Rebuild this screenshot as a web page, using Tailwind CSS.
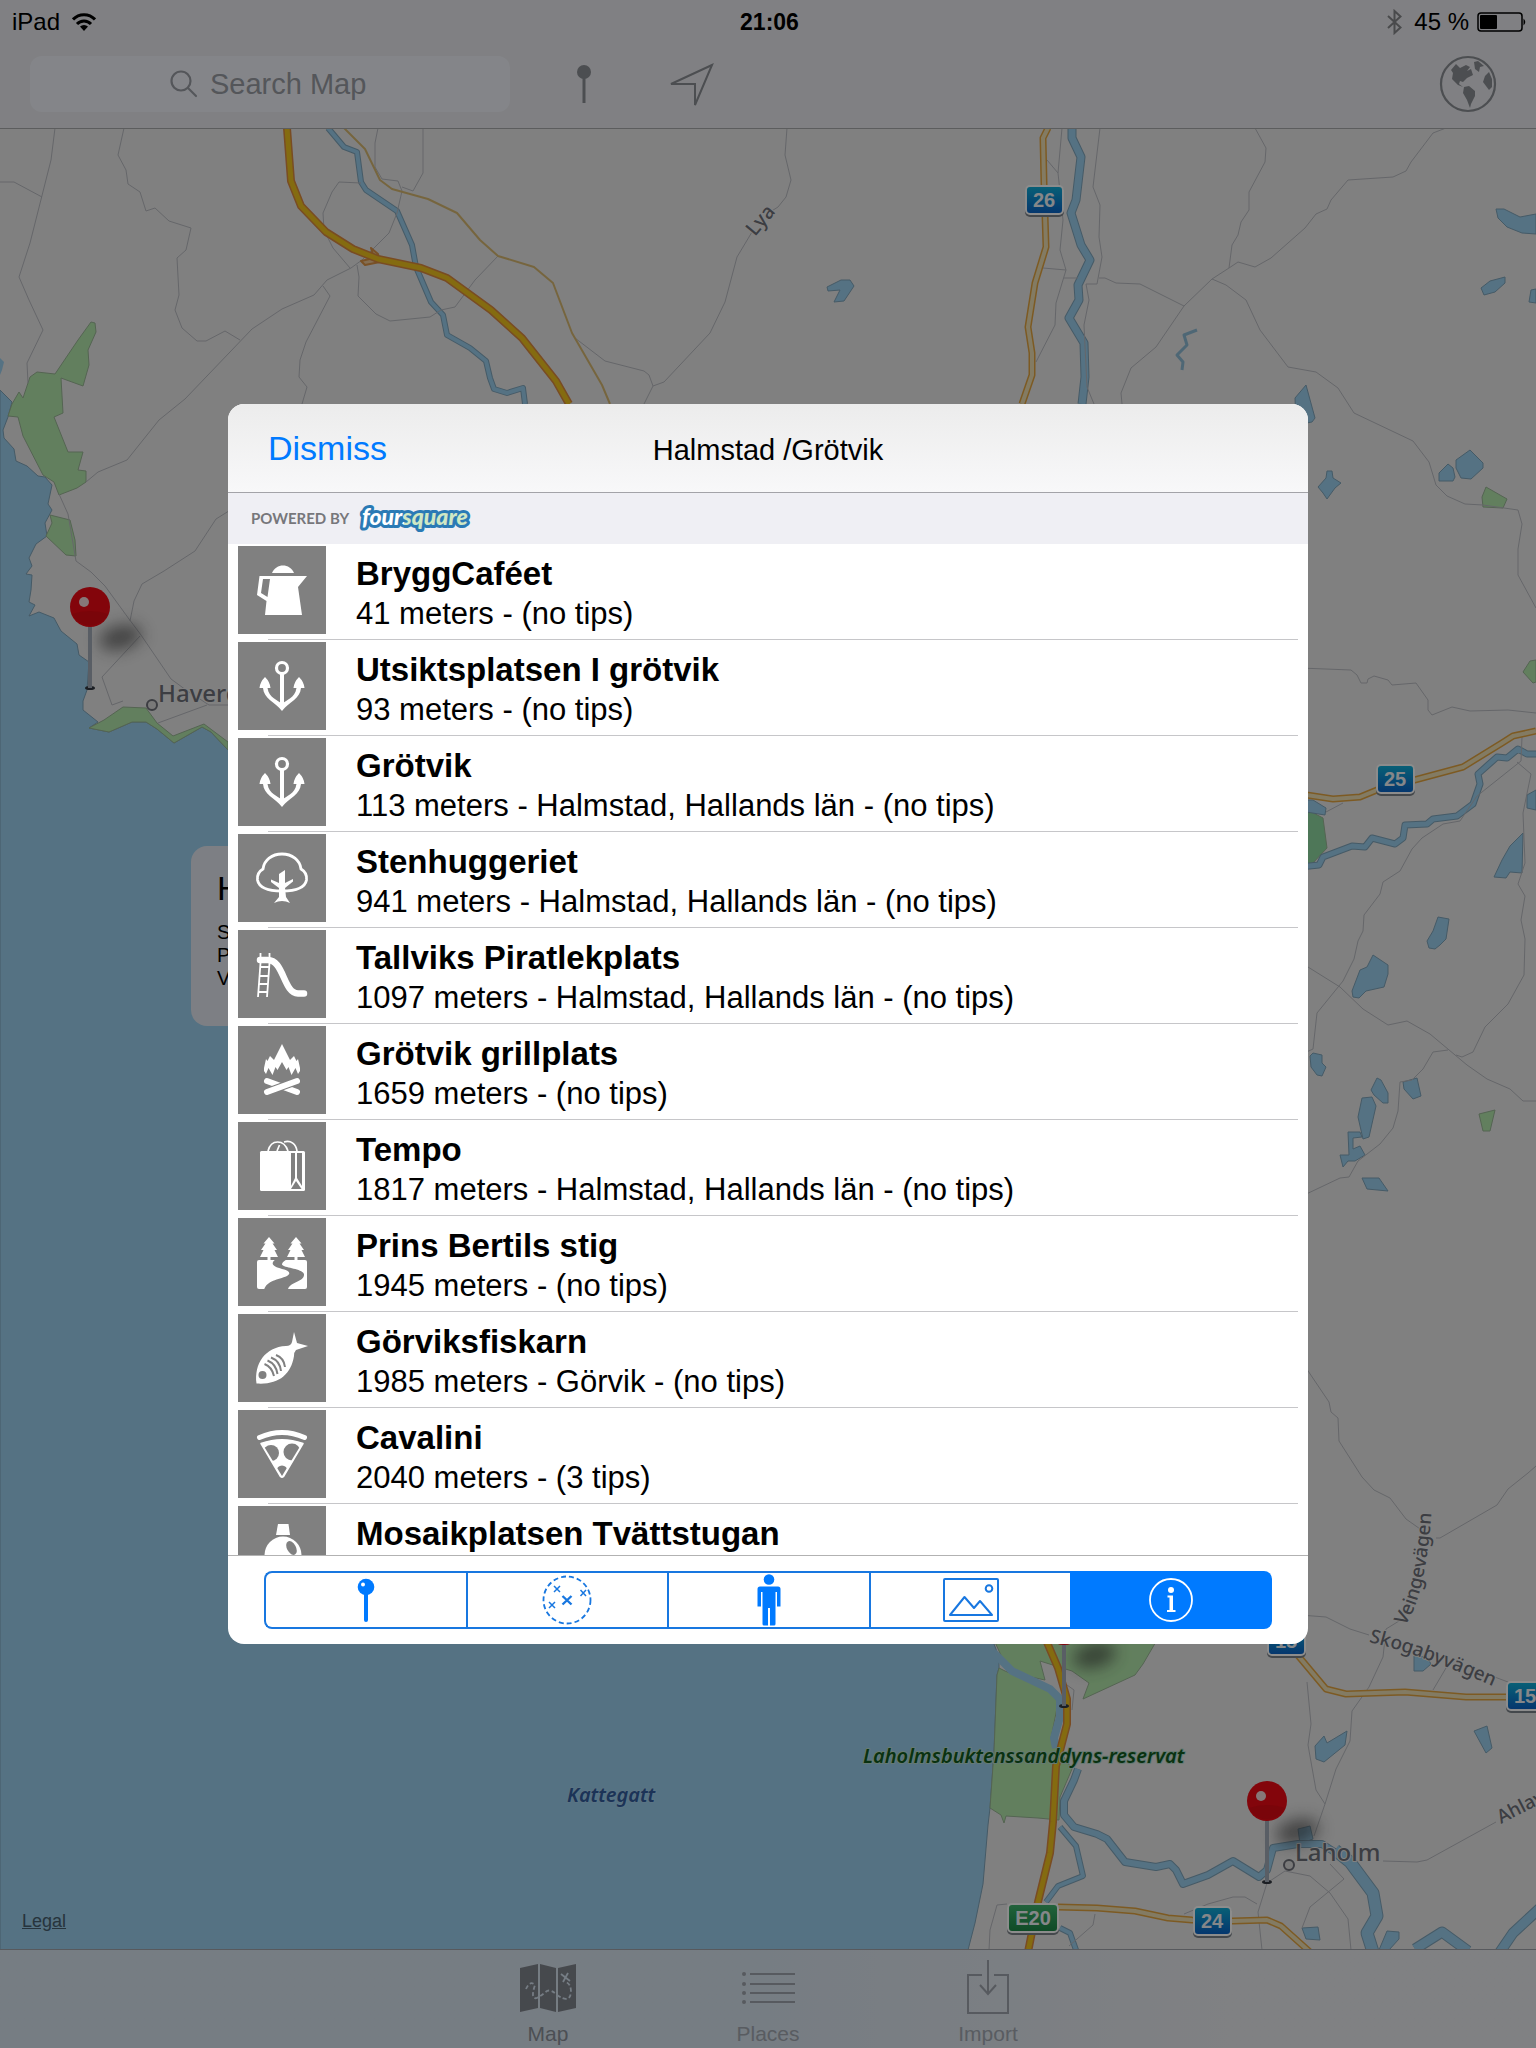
<!DOCTYPE html>
<html lang="en">
<head>
<meta charset="utf-8">
<meta name="viewport" content="width=device-width, initial-scale=1">
<title>Map</title>
<script src="https://cdn.jsdelivr.net/npm/@tailwindcss/browser@4"></script>
</head>
<body class="relative flex h-screen flex-col overflow-hidden bg-[#e9e9e9] font-['Liberation_Sans',Arial,sans-serif] text-black">

<!-- Map canvas -->
<svg class="absolute inset-0 size-full" viewBox="0 0 1536 2048" preserveAspectRatio="xMidYMid slice" role="img" aria-label="Map of the coast around Halmstad">
  <defs>
    <linearGradient id="blueSign" x1="0" y1="0" x2="0" y2="1"><stop offset="0" stop-color="#0fb0d8"/><stop offset="1" stop-color="#0a62c8"/></linearGradient>
    <linearGradient id="greenSign" x1="0" y1="0" x2="0" y2="1"><stop offset="0" stop-color="#3fb56e"/><stop offset="1" stop-color="#1c8746"/></linearGradient>
    <filter id="soft" x="-80%" y="-150%" width="260%" height="400%"><feGaussianBlur stdDeviation="8"/></filter>
    <g id="pin">
      <ellipse cx="30" cy="-50" rx="22" ry="12" fill="#333" opacity=".6" filter="url(#soft)" transform="rotate(-14 28 -52)"/>
      <ellipse cx="0" cy="0" rx="5" ry="2" fill="#333a42"/>
      <rect x="-2" y="-64" width="4" height="64" fill="#a3abb8"/>
      <circle cx="0" cy="-81" r="20" fill="#ee0a14"/>
      <path d="M-18 -74A20 20 0 0 0 18 -74Q0 -80 -18 -74Z" fill="#d80a12" opacity=".7"/>
      <circle cx="-6" cy="-86" r="5" fill="#f4dada"/>
    </g>
    <g id="signPlate">
      <rect x="-1" y="0" width="39" height="31" rx="5" fill="#7d838a"/>
      <rect x="0" y="0" width="37" height="28" rx="4" fill="url(#blueSign)" stroke="#fff" stroke-width="2"/>
    </g>
  </defs>

  <!-- sea -->
  <path fill="#9bcfee" stroke="#7fa5bb" stroke-width="1" d="M0 390L12 402 8 417 3 430 4 438 14 449 16 461 27 466 38 476 45 477 52 485 48 504 52 510 45 523 47 536 36 544 29 558 32 566 26 574 32 575 31 590 29 602 35 605 29 616 39 612 54 618 61 631 77 644 79 655 89 662 87 690 83 701 83 710 98 722 89 728 109 732 132 722 146 722 157 729 174 743 202 727 211 732 228 750 600 900 900 1400 994 1644 999 1657 999 1668 997 1675 994 1752 990 1808 988 1825 983 1884 975 1923 968 1950 968 2048 0 2048Z"/>
  <path fill="#9bcfee" d="M0 358L4 362 2 370 0 375Z"/>

  <!-- woodland and reserves -->
  <g fill="#b3e8ab" stroke="#9ab796" stroke-width="1">
    <path d="M91 322L95 323 96 332 88 350 89 365 83 386 61 378 63 413 54 417 68 452 83 452 78 470 86 471 86 482 77 488 59 495 54 482 43 475 23 436 18 417 8 416 12 404 19 392 23 398 30 377 37 372 55 374 78 340Z"/>
    <path d="M50 515L70 520 75 540 76 556 66 555 46 536 52 523Z"/>
    <path d="M123 707L146 708 157 723 173 736 204 724 228 742 228 750 211 732 202 727 174 743 157 729 146 722 132 722 109 732 89 728 104 720Z"/>
    <path d="M1482 497L1486 487 1507 499 1503 508 1483 507Z"/>
    <path d="M1523 672L1530 661 1536 660 1536 682 1533 683Z"/>
    <path d="M1300 806L1323 818 1327 848 1312 864 1300 864Z" fill="#8ed9a0"/>
    <path d="M1479 1114L1495 1110 1490 1131 1483 1131Z"/>
    <path d="M994 1640L1157 1640 1143 1664 1135 1675 1083 1699 1089 1683 1072 1671 1040 1661 1045 1680 1022 1675 1005 1664Z"/>
    <path d="M999 1668L1005 1671 1050 1690 1058 1703 1051 1738 1072 1769 1060 1797 1059 1820 1038 1818 1006 1816 1004 1823 1001 1815 990 1808 994 1752 997 1675Z"/>
  </g>

  <!-- lakes -->
  <g fill="#9bcfee" stroke="#7fa5bb" stroke-width="1">
    <path d="M827 287L841 280 850 280 854 286 844 301 834 302 840 290 828 291Z"/>
    <path d="M1496 209L1504 209 1520 217 1536 214 1536 234 1522 233 1507 227 1498 218Z"/>
    <path d="M1481 288L1490 281 1505 277 1505 283 1495 292 1484 295Z"/>
    <path d="M1529 302L1531 290 1536 289 1536 303Z"/>
    <path d="M1306 385L1295 398 1296 425 1312 422 1315 418Z"/>
    <path d="M1318 487L1326 478 1327 471 1332 471 1333 478 1341 483 1335 488 1327 499 1323 493Z"/>
    <path d="M1439 473L1448 464 1453 468 1455 477 1453 481 1439 481Z"/>
    <path d="M1456 460L1470 450 1483 463 1483 468 1471 479 1461 478 1456 468Z"/>
    <path d="M1300 800L1313 800 1326 808 1325 815 1300 811Z"/>
    <path d="M1494 877L1502 860 1510 846 1523 833 1522 873 1510 872 1506 878Z"/>
    <path d="M1527 808L1527 795 1536 790 1536 810Z"/>
    <path d="M1427 941L1433 931 1438 917 1449 919 1446 939 1440 945 1435 949 1429 948Z"/>
    <path d="M1352 991L1360 970 1367 967 1373 955 1388 965 1388 974 1384 987 1366 991 1359 998 1353 997Z"/>
    <path d="M1310 1056L1313 1053 1322 1055 1322 1063 1326 1067 1322 1076 1317 1075 1311 1067Z"/>
    <path d="M1371 1090L1377 1078 1381 1080 1388 1093 1388 1103 1383 1103 1374 1095Z"/>
    <path d="M1358 1117L1362 1098 1372 1097 1376 1106 1369 1137 1363 1139Z"/>
    <path d="M1348 1132L1360 1132 1362 1137 1353 1138 1353 1149 1360 1146 1365 1155 1355 1161 1348 1161 1343 1167 1340 1155 1349 1155Z"/>
    <path d="M1403 1082L1417 1078 1421 1096 1413 1099 1404 1089Z"/>
    <path d="M1362 1178L1379 1178 1388 1191 1367 1189Z"/>
    <path d="M1298 1829L1310 1826 1313 1839 1300 1844Z"/>
    <path d="M1379 1950L1387 1931 1399 1932 1399 1939 1389 1950Z"/>
    <path d="M1302 1928L1318 1927 1320 1940 1306 1939Z"/>
    <path d="M1315 1746L1324 1736 1327 1743 1347 1731 1345 1745 1324 1762 1316 1759Z"/>
    <path d="M1474 1731L1487 1726 1492 1748 1486 1753Z"/>
    <path d="M1414 1656L1427 1657 1431 1664 1423 1671 1414 1671Z"/>
  </g>

  <!-- rivers: bank, then water -->
  <g fill="none" stroke-linejoin="round">
    <g stroke="#7fa5bb">
      <path stroke-width="6" d="M328 128L344 147 357 152 361 182 366 190 397 211 412 245 416 267 431 302 443 315 447 335 470 348 486 361 490 378 494 389 507 393 523 388 525 404"/>
      <path stroke-width="9" d="M1072 128L1072 138 1081 157 1076 200 1071 213 1081 245 1090 260 1078 285 1079 300 1069 318 1084 343 1085 377 1082 404"/>
      <path stroke-width="7" d="M1300 867L1319 865 1323 857 1352 846 1365 847 1372 838 1395 844 1403 838 1405 825 1427 824 1433 819 1457 816 1473 804 1480 784 1478 774 1497 757 1507 758 1518 749 1527 754 1536 754"/>
      <path stroke-width="8" d="M1078 1769L1074 1780 1064 1801 1064 1815 1074 1827 1097 1834 1107 1839 1125 1862 1156 1867 1170 1864 1176 1870 1183 1884 1208 1875 1233 1861 1259 1877 1267 1870 1273 1848 1298 1844 1322 1844 1350 1862"/>
      <path stroke-width="13" d="M1335 1850L1350 1862 1373 1893 1377 1916 1367 1933 1373 1952"/>
      <path stroke-width="6" d="M1060 1827L1076 1846 1083 1876 1058 1886 1046 1902M1060 1928L1070 1933 1076 1950"/>
      <path stroke-width="11" d="M1415 1949L1442 1932 1468 1951M1500 1952L1513 1933 1540 1908"/>
    </g>
    <g stroke="#9bcfee">
      <path stroke-width="4" d="M328 128L344 147 357 152 361 182 366 190 397 211 412 245 416 267 431 302 443 315 447 335 470 348 486 361 490 378 494 389 507 393 523 388 525 404"/>
      <path stroke-width="7" d="M1072 128L1072 138 1081 157 1076 200 1071 213 1081 245 1090 260 1078 285 1079 300 1069 318 1084 343 1085 377 1082 404"/>
      <path stroke-width="3" stroke="#8fbcd6" d="M1197 330L1184 335 1187 345 1177 355 1183 362 1182 370"/>
      <path stroke-width="5" d="M1300 867L1319 865 1323 857 1352 846 1365 847 1372 838 1395 844 1403 838 1405 825 1427 824 1433 819 1457 816 1473 804 1480 784 1478 774 1497 757 1507 758 1518 749 1527 754 1536 754"/>
      <path stroke-width="8" d="M993 1652L1012 1671 1050 1689 1060 1699 1060 1717 1054 1738 1056 1748"/>
      <path stroke-width="6" d="M1078 1769L1074 1780 1064 1801 1064 1815 1074 1827 1097 1834 1107 1839 1125 1862 1156 1867 1170 1864 1176 1870 1183 1884 1208 1875 1233 1861 1259 1877 1267 1870 1273 1848 1298 1844 1322 1844 1350 1862"/>
      <path stroke-width="11" d="M1335 1850L1350 1862 1373 1893 1377 1916 1367 1933 1373 1952"/>
      <path stroke-width="4" d="M1060 1827L1076 1846 1083 1876 1058 1886 1046 1902M1060 1928L1070 1933 1076 1950"/>
      <path stroke-width="9" d="M1415 1949L1442 1932 1468 1951M1500 1952L1513 1933 1540 1908"/>
    </g>
  </g>

  <!-- minor roads -->
  <g fill="none" stroke="#b9bbc1" stroke-width="1">
    <path d="M55 128L51 160 30 243 19 277 29 300 43 330 27 363 28 383M0 182H14L42 197"/>
    <path d="M124 128L118 155 126 170 128 184 140 192 146 211 155 208 169 221 191 228 186 250 177 258 179 295 175 310 182 328 197 341 206 341 225 331 240 340"/>
    <path d="M86 482L98 472 127 460 139 445 159 420 185 399 252 329 282 309 314 295 327 280 351 268 362 260 389 233 397 213 402 191 398 181 382 179 375 167 375 143 378 128"/>
    <path d="M423 128V173L413 191 402 187M361 183L339 182 332 192 323 213 324 230 333 248 350 268"/>
    <path d="M357 265L359 277 358 296 376 314 390 321 430 317 441 310 455 307 475 280 498 256"/>
    <path d="M323 286L330 296 306 342 300 360 299 377 307 387 302 404"/>
    <path d="M752 232L737 257 725 302 710 333 664 382 653 386 644 404M653 386L649 375 644 371 605 361 575 338"/>
    <path d="M787 128L785 155 791 180 786 197 778 207 770 212"/>
    <path d="M1062 128L1058 173 1063 220 1060 250 1066 270 1056 303 1055 325 1036 362M1047 160L1058 173M1043 268L1066 270"/>
    <path d="M1100 128L1093 187 1100 205 1099 237 1102 257 1097 284 1086 284 1089 300 1084 325 1087 387 1094 404"/>
    <path d="M1255 128L1266 148 1265 162 1249 192 1249 210 1241 222 1238 235 1232 245 1229 268"/>
    <path d="M1446 128L1433 133 1411 162 1406 171 1393 177 1348 180 1331 200 1327 209 1316 214 1305 228 1271 258 1255 267 1238 262 1229 268 1212 279 1184 306 1156 347 1131 368 1121 393 1122 404"/>
    <path d="M1184 306L1140 284 1116 283 1105 278 1099 278M1064 278H1078"/>
    <path d="M1212 279L1226 285 1246 300 1260 330 1288 367 1316 372 1338 388 1354 413 1413 441 1429 462 1436 485 1447 496 1465 504 1483 505 1518 510 1522 524 1518 549 1518 575 1536 608"/>
    <path d="M1300 668L1351 670 1357 675 1361 683 1367 683 1368 679 1374 676 1388 680 1392 685 1416 683 1428 700 1428 710 1432 715 1452 707 1470 711 1508 710 1536 713"/>
    <path d="M1522 737L1521 761 1477 796 1460 821 1443 824 1422 838 1412 849 1400 871 1383 882 1380 894 1364 915 1363 931 1358 941 1354 959 1343 981 1317 1013 1313 1049 1300 1055M1326 812L1343 803"/>
    <path d="M1517 762L1531 774 1523 813 1525 863 1518 884 1525 896 1521 920 1525 939 1524 975 1508 1004 1485 1027 1473 1052 1462 1057 1456 1055"/>
    <path d="M1300 962L1340 987 1363 1009 1388 1025 1407 1021 1430 1034 1467 1065 1487 1079 1510 1089 1523 1101 1536 1101"/>
    <path d="M1448 1050L1433 1052 1423 1069 1412 1080 1400 1082 1398 1111 1393 1128 1380 1144 1358 1161 1349 1177 1340 1178 1300 1197"/>
    <path d="M59 494L68 514 76 561 91 572 105 586 129 619 141 635 171 679 186 690 209 705H232M232 509L216 519 195 551 164 571 142 584 134 601 130 621M140 636L102 677 112 705 123 701M158 723L207 705"/>
    <path d="M1300 1359L1329 1402 1331 1412 1338 1418 1339 1441 1362 1477 1374 1490 1390 1498 1406 1519 1423 1531M1436 1538H1440L1497 1505 1508 1489 1528 1473 1536 1466"/>
    <path d="M1300 1615L1326 1617 1350 1629 1369 1635M1492 1676L1508 1682M1399 1621L1386 1629 1383 1657 1369 1687 1352 1711 1350 1741 1336 1769 1325 1804 1314 1836M1307 1682L1311 1724 1308 1745 1316 1790 1325 1804M1446 1668L1433 1690"/>
    <path d="M1496 1822L1427 1860 1417 1862 1383 1861M1267 1883L1258 1912 1262 1950M1267 1883L1285 1871 1310 1876 1330 1893 1348 1919 1351 1950M1330 1864L1344 1879 1310 1907 1302 1928M1257 1904L1245 1897 1233 1897 1208 1904 1184 1914"/>
    <path d="M1007 1904L997 1905 990 1930 989 1950M1095 1914L1093 1925 1069 1946M1060 1680L1074 1690 1072 1710"/>
  </g>

  <!-- main roads: casing, then fill -->
  <g fill="none" stroke-linejoin="round">
    <path stroke="#d8b972" stroke-width="2" d="M344 128L365 149 380 180 392 189 428 199 457 213 480 240 498 256 534 267 553 283 572 333 602 385 610 404"/>
    <g stroke="#e3a540" stroke-width="7">
      <path d="M1048 128L1043 138 1044 183 1046 247 1035 283 1028 327 1032 353 1032 375 1022 404"/>
      <path d="M1300 794L1333 799 1360 797 1377 790 1422 778 1463 767 1502 743 1513 736 1536 731"/>
      <path d="M1058 1907L1097 1908 1135 1911 1168 1918 1192 1920 1233 1921 1267 1920 1281 1926 1310 1952"/>
      <path d="M1290 1646L1326 1689 1346 1694 1405 1692 1466 1697 1512 1697"/>
    </g>
    <g stroke="#eee0b4" stroke-width="4">
      <path d="M1048 128L1043 138 1044 183 1046 247 1035 283 1028 327 1032 353 1032 375 1022 404"/>
      <path d="M1300 794L1333 799 1360 797 1377 790 1422 778 1463 767 1502 743 1513 736 1536 731"/>
      <path d="M1058 1907L1097 1908 1135 1911 1168 1918 1192 1920 1233 1921 1267 1920 1281 1926 1310 1952"/>
      <path d="M1290 1646L1326 1689 1346 1694 1405 1692 1466 1697 1512 1697"/>
    </g>
    <path stroke="#dc9446" stroke-width="2" fill="#f0c896" d="M374 258L371 248 378 254 380 262 365 265 361 261Z"/>
    <g stroke="#dc8a40" stroke-width="8">
      <path d="M287 128L291 181 301 206 326 232 353 249 378 259 421 268 447 278 491 310 522 338 556 381 569 404"/>
      <path d="M1046 1640L1058 1668 1067 1699 1067 1724 1056 1766 1053 1822 1050 1853 1038 1902 1028 1952"/>
    </g>
    <g stroke="#f0c41e" stroke-width="5">
      <path d="M287 128L291 181 301 206 326 232 353 249 378 259 421 268 447 278 491 310 522 338 556 381 569 404"/>
      <path d="M1046 1640L1058 1668 1067 1699 1067 1724 1056 1766 1053 1822 1050 1853 1038 1902 1028 1952"/>
    </g>
  </g>

  <!-- road signs -->
  <g font-family="'Liberation Sans', Arial, sans-serif" font-weight="700" font-size="20" fill="#f2f6fa" text-anchor="middle">
    <use href="#signPlate" x="1026" y="186"/>
    <use href="#signPlate" x="1377" y="765"/>
    <use href="#signPlate" x="1268" y="1627"/>
    <use href="#signPlate" x="1507" y="1682"/>
    <use href="#signPlate" x="1194" y="1907"/>
    <rect x="1007" y="1904" width="52" height="31" rx="5" fill="#7d838a"/>
    <rect x="1008" y="1904" width="50" height="28" rx="4" fill="url(#greenSign)" stroke="#fff" stroke-width="2"/>
    <text x="1044" y="207">26</text>
    <text x="1395" y="786">25</text>
    <text x="1286" y="1648">15</text>
    <text x="1525" y="1703">15</text>
    <text x="1212" y="1928">24</text>
    <text x="1033" y="1925">E20</text>
  </g>

  <!-- place names -->
  <g font-family="'Noto Sans', 'Open Sans', sans-serif" font-weight="500" fill="#6d7078" stroke="#ececec" stroke-width="2" paint-order="stroke" stroke-linejoin="round">
    <path id="veinge" d="M1405 1626Q1427 1594 1432 1502" fill="none" stroke="none"/>
    <path id="skogaby" d="M1369 1642Q1425 1655 1510 1694" fill="none" stroke="none"/>
    <text font-size="20" transform="translate(755 237) rotate(-50)">Lya</text>
    <text font-size="19"><textPath href="#veinge">Veingevägen</textPath></text>
    <text font-size="19"><textPath href="#skogaby">Skogabyvägen</textPath></text>
    <text font-size="19" transform="translate(1501 1824) rotate(-27)">Ahlavägen</text>
    <text font-size="24" x="158" y="702">Haverdal</text>
    <text font-size="24" x="1295" y="1861">Laholm</text>
    <g font-size="20" font-style="italic" font-weight="600">
      <text x="863" y="1763" fill="#125c20" stroke="#b9dfd2">Laholmsbuktenssanddyns-reservat</text>
      <text x="567" y="1802" fill="#335e9e" stroke="#a6d3ee">Kattegatt</text>
    </g>
  </g>
  <g fill="#dcdcdc" stroke="#6d7078" stroke-width="2">
    <circle cx="152" cy="705" r="5"/>
    <circle cx="1289" cy="1865" r="5"/>
  </g>

  <use href="#pin" x="90" y="688"/>
  <use href="#pin" x="1064" y="1706"/>
  <use href="#pin" x="1267" y="1882"/>
</svg>

<!-- Status and search bar -->
<header class="relative flex h-[129px] shrink-0 flex-col border-b border-[#a8a9ac] bg-[#e9eaee]">
  <div class="grid h-10 grid-cols-3 items-center pt-0.5 pr-[9px] pl-3 text-2xl leading-10">
    <div class="flex items-center gap-3">
      <span>iPad</span>
      <svg class="h-5 w-6" viewBox="0 0 24 20"><g fill="none" stroke="#000" stroke-width="3"><path d="M1 7.500A15 15 0 0 1 23 7.500"/><path d="M5 12A9.500 9.500 0 0 1 19 12"/></g><path d="M12 19L8 14.500A6 6 0 0 1 16 14.500Z"/></svg>
    </div>
    <span class="text-center text-[23px] font-bold">21:06</span>
    <div class="flex items-center justify-end gap-2">
      <svg class="mr-1 h-[26px] w-[15px]" viewBox="0 0 15 26" fill="none" stroke="#86878a" stroke-width="2"><path d="M1 7L13.500 18.500 7.500 24V2L13.500 7.500 1 19"/></svg>
      <span>45 %</span>
      <svg class="h-[20px] w-[50px]" viewBox="0 0 50 20"><rect x="1" y="1" width="44" height="18" rx="3" fill="none" stroke="#000" stroke-width="1.500"/><rect x="3" y="3" width="17" height="14" rx="1"/><path d="M46.500 6.500Q50 10 46.500 13.500Z"/></svg>
    </div>
  </div>
  <div class="flex h-[88px] items-center pr-[39px] pl-[30px]">
    <label class="flex h-14 w-[480px] items-center justify-center gap-3 rounded-xl bg-[#f1f3fa]">
      <svg class="size-7" viewBox="0 0 28 28" fill="none" stroke="#9a9da4" stroke-width="2.200" stroke-linecap="round"><circle cx="11" cy="11" r="9.500"/><path d="M18 18L26 26"/></svg>
      <input type="text" aria-label="Search Map" placeholder="Search Map" class="w-[160px] bg-transparent text-[29px] leading-10 outline-none placeholder:text-[#9a9da4] placeholder:opacity-100">
    </label>
    <button type="button" aria-label="Drop pin" class="ml-[60px] flex h-14 w-7 items-center justify-center">
      <svg class="h-10 w-4" viewBox="0 0 16 40"><circle cx="8" cy="8" r="7" fill="#8b8e94"/><path d="M8 8V39" stroke="#8b8e94" stroke-width="3"/></svg>
    </button>
    <button type="button" aria-label="Current location" class="ml-[70px] flex size-12 items-center justify-center">
      <svg class="size-12" viewBox="0 0 48 48" fill="none" stroke="#8b8e94" stroke-width="2"><path d="M44 5L3 24 27 24 27 45Z"/></svg>
    </button>
    <button type="button" aria-label="Map type" class="ml-auto flex size-[58px] items-center justify-center">
      <svg class="size-[58px]" viewBox="0 0 58 58"><circle cx="29" cy="29" r="27" fill="none" stroke="#8b8e94" stroke-width="2.200"/><g fill="#8b8e94"><path d="M12 15L17 9 21 13 27 10 31 12 28 16 32 14 34 20 28 23 24 27 21 26 20 29 24 32 19 30 13 24 14 18Z"/><path d="M25 32L30 31 36 36 36 41 32 49 31 53 28 45 24 38Z"/><path d="M35 7L39 6 45 11 41 12 40 17 36 14Z"/><path d="M50 17L53 24 53 32 50 35 44 27 46 21Z"/></g></svg>
    </button>
  </div>
</header>

<main class="relative flex min-h-0 flex-1 items-end">
  <!-- pin callout -->
  <section class="absolute top-[717px] left-[191px] h-[180px] w-[400px] rounded-2xl bg-[#e3e8f0] px-[26px] py-[22px]">
    <h2 class="text-[34px] leading-10">Halmstad</h2>
    <p class="mt-[13px] text-xl leading-[23px]">S<br>P<br>V</p>
  </section>
  <a href="#" class="mb-[14px] ml-[22px] text-lg leading-7 text-[#47606f] underline">Legal</a>
</main>

<!-- Tab bar -->
<nav class="relative flex h-[99px] shrink-0 justify-center border-t border-[#9ea3a9] bg-linear-to-r from-[#d8e3ee] from-50% to-[#e9ebee] to-80% text-[21px] leading-6 text-[#a2a8b1]">
  <a href="#" class="flex w-[220px] flex-col items-center pt-3 text-[#8b9099]">
    <svg class="h-[52px] w-14" viewBox="0 0 56 52"><g fill="#80858d"><path d="M0 6L18 2V46L0 50Z"/><path d="M20 2L36 6V50L20 46Z"/><path d="M38 6L56 2V46L38 50Z"/></g><g fill="none" stroke="#d6e3f1" stroke-width="1.800"><path stroke-dasharray="4 2.500" d="M6 27Q10 18 15 23Q10 38 17 36Q22 33 27 29Q31 27 37 33Q50 42 51 30Q51 22 46 20"/><path d="M41 12L50 19M48 11L43 20"/></g></svg>
    <span class="mt-2">Map</span>
  </a>
  <a href="#" class="flex w-[220px] flex-col items-center pt-3">
    <svg class="h-[52px] w-[54px]" viewBox="0 0 54 52" fill="none" stroke="#9ea4ad" stroke-width="2"><path d="M9 12H54M9 22H54M9 31H54M9 40H54"/><path stroke-width="4" stroke-linecap="round" d="M3 12H3.010M3 22H3.010M3 31H3.010M3 40H3.010"/></svg>
    <span class="mt-2">Places</span>
  </a>
  <a href="#" class="flex w-[220px] flex-col items-center pt-2">
    <svg class="h-14 w-11" viewBox="0 0 44 56" fill="none" stroke="#9ea4ad" stroke-width="2"><path d="M16 17H2V55H42V17H28M22 2V35M14 27L22 36 30 27"/></svg>
    <span class="mt-2">Import</span>
  </a>
</nav>

<!-- Venue sheet -->
<div class="fixed inset-0 flex items-center justify-center bg-black/45">
  <div role="dialog" aria-modal="true" aria-labelledby="sheet-title" class="flex h-[1240px] max-h-full w-[1080px] max-w-full flex-col overflow-hidden rounded-2xl bg-white">
    <div class="grid h-[89px] shrink-0 grid-cols-[1fr_auto_1fr] items-center border-b border-[#a3a3a8] bg-linear-to-b from-[#ececec] to-[#f8f8f9] px-10">
      <button type="button" class="justify-self-start text-[34px] leading-10 text-[#007aff]">Dismiss</button>
      <h1 id="sheet-title" class="pt-1 text-[29px] leading-10">Halmstad /Grötvik</h1>
    </div>
    <div class="flex h-[51px] shrink-0 items-center gap-2 bg-[#efeff4] pl-[23px]">
      <span class="font-[Lato,sans-serif] text-[15px] font-bold text-[#77777b]">POWERED BY</span>
      <svg class="h-9 w-[120px]" viewBox="0 0 120 36" role="img" aria-label="foursquare"><defs><linearGradient id="wordmark" gradientUnits="userSpaceOnUse" x1="0" y1="0" x2="120" y2="0"><stop offset=".395" stop-color="#fff"/><stop offset=".395" stop-color="#cfe8c4"/></linearGradient></defs><text x="5" y="24" font-family="Lato, sans-serif" font-weight="900" font-style="italic" font-size="23" fill="url(#wordmark)" stroke="#2a7ab5" stroke-width="6" stroke-linejoin="round" paint-order="stroke">foursquare</text></svg>
    </div>

    <ul class="min-h-0 flex-1 overflow-hidden">
      <li>
        <div class="flex h-[95px] gap-[30px] pt-0.5 pl-[10px]">
          <svg class="size-[88px] shrink-0 bg-[#808080]" viewBox="0 0 88 88" fill="#fff"><path d="M34 27C38 17 52 17 56 27Z"/><path fill-rule="evenodd" d="M21.500 30H69L60 41 64 69H27L28.500 55 19 49ZM25 33L23 47 29.500 51 32 33Z"/></svg>
          <div class="pt-[9px]"><h2 class="text-[33px] leading-[38px] font-bold">BryggCaféet</h2><p class="text-[31px] leading-[42px]">41 meters - (no tips)</p></div>
        </div>
        <hr class="mr-[10px] ml-10 border-[#c6c6c9]">
      </li>
      <li>
        <div class="flex h-[95px] gap-[30px] pt-0.5 pl-[10px]">
          <svg class="size-[88px] shrink-0 bg-[#808080]" viewBox="0 0 88 88" fill="#fff"><g id="anchor"><circle cx="44" cy="26" r="5.500" fill="none" stroke="#fff" stroke-width="3.200"/><path d="M42 31H46V62H42Z"/><path d="M27 35Q32 40 32.500 46H29.500C31 56 40 58 44 62C48 58 57 56 58.500 46H55.500Q56 40 61 35Q66 40 66.500 46H63C62 57 52 59 44 69C36 59 26 57 25 46H21.500Q22 40 27 35Z"/></g></svg>
          <div class="pt-[9px]"><h2 class="text-[33px] leading-[38px] font-bold">Utsiktsplatsen I grötvik</h2><p class="text-[31px] leading-[42px]">93 meters - (no tips)</p></div>
        </div>
        <hr class="mr-[10px] ml-10 border-[#c6c6c9]">
      </li>
      <li>
        <div class="flex h-[95px] gap-[30px] pt-0.5 pl-[10px]">
          <svg class="size-[88px] shrink-0 bg-[#808080]" viewBox="0 0 88 88" fill="#fff"><use href="#anchor"/></svg>
          <div class="pt-[9px]"><h2 class="text-[33px] leading-[38px] font-bold">Grötvik</h2><p class="text-[31px] leading-[42px]">113 meters - Halmstad, Hallands län - (no tips)</p></div>
        </div>
        <hr class="mr-[10px] ml-10 border-[#c6c6c9]">
      </li>
      <li>
        <div class="flex h-[95px] gap-[30px] pt-0.5 pl-[10px]">
          <svg class="size-[88px] shrink-0 bg-[#808080]" viewBox="0 0 88 88" fill="#fff"><path fill="none" stroke="#fff" stroke-width="2.800" d="M44 20C34 20 26 26 25 35C20 38 19 42 19.500 46C21 54 31 57 44 57C57 57 67 54 68.500 46C69 42 68 38 63 35C62 26 54 20 44 20Z"/><path d="M41 40L47 36V49L55 45V47.500L47 54 48 63 52 69Q44 65 36 69L41 63V54L33 48V45.500L41 49Z"/></svg>
          <div class="pt-[9px]"><h2 class="text-[33px] leading-[38px] font-bold">Stenhuggeriet</h2><p class="text-[31px] leading-[42px]">941 meters - Halmstad, Hallands län - (no tips)</p></div>
        </div>
        <hr class="mr-[10px] ml-10 border-[#c6c6c9]">
      </li>
      <li>
        <div class="flex h-[95px] gap-[30px] pt-0.5 pl-[10px]">
          <svg class="size-[88px] shrink-0 bg-[#808080]" viewBox="0 0 88 88" fill="none" stroke="#fff"><path stroke-width="1.800" d="M22.500 23V33L20 67M31.500 23V33L29 67M22 37H31M21.500 46H30.500M21 54H30M20.500 62H29.500"/><path stroke-width="6.500" stroke-linecap="round" d="M22 30H29C46 29 45 63 60 63.500H66"/></svg>
          <div class="pt-[9px]"><h2 class="text-[33px] leading-[38px] font-bold">Tallviks Piratlekplats</h2><p class="text-[31px] leading-[42px]">1097 meters - Halmstad, Hallands län - (no tips)</p></div>
        </div>
        <hr class="mr-[10px] ml-10 border-[#c6c6c9]">
      </li>
      <li>
        <div class="flex h-[95px] gap-[30px] pt-0.5 pl-[10px]">
          <svg class="size-[88px] shrink-0 bg-[#808080]" viewBox="0 0 88 88" fill="#fff"><path d="M44 18L52 34 56 30 58.500 35 60 33 62 42V45L60 48 57.500 42 53.500 49 50.500 41 48.500 44 44 36 39.500 44 37.500 41 34.500 49 30.500 42 28 48 26 45V42L28 33 29.500 35 32 30 36 34Z"/><g stroke-linecap="round"><path stroke="#fff" stroke-width="6" d="M29 55L59 66"/><path stroke="#808080" stroke-width="8" d="M33 64.500L55 56.500"/><path stroke="#fff" stroke-width="6" d="M29 66L59 55"/></g></svg>
          <div class="pt-[9px]"><h2 class="text-[33px] leading-[38px] font-bold">Grötvik grillplats</h2><p class="text-[31px] leading-[42px]">1659 meters - (no tips)</p></div>
        </div>
        <hr class="mr-[10px] ml-10 border-[#c6c6c9]">
      </li>
      <li>
        <div class="flex h-[95px] gap-[30px] pt-0.5 pl-[10px]">
          <svg class="size-[88px] shrink-0 bg-[#808080]" viewBox="0 0 88 88" fill="#fff"><rect x="22" y="29" width="45" height="40" rx="1.500"/><path fill="#808080" d="M53 31H57V56L53 64ZM59 31H64V64L59 56ZM53 67L58 59 63.500 67Z"/><path fill="none" stroke="#fff" stroke-width="1.700" d="M30 29C33 17 46 17 50 29M46 20C53 18 58 22 59 29M39 29L41.500 23"/></svg>
          <div class="pt-[9px]"><h2 class="text-[33px] leading-[38px] font-bold">Tempo</h2><p class="text-[31px] leading-[42px]">1817 meters - Halmstad, Hallands län - (no tips)</p></div>
        </div>
        <hr class="mr-[10px] ml-10 border-[#c6c6c9]">
      </li>
      <li>
        <div class="flex h-[95px] gap-[30px] pt-0.5 pl-[10px]">
          <svg class="size-[88px] shrink-0 bg-[#808080]" viewBox="0 0 88 88" fill="#fff"><g id="fir"><path d="M31 19L36.500 25.500H34.500L39 32H36.500L40 39H22L25.500 32H23L27.500 25.500H25.500Z"/><path d="M29.500 39H32.500V43H29.500Z"/></g><use href="#fir" x="27"/><rect x="19" y="42" width="50" height="29" rx="2"/><path fill="#808080" d="M38 41C31 46 36 49 44 51C50 52 54 55 49 58C40 62 29 62 26 72H50C50 64 67 64 66 56C64 50 43 50 44 46Q45 43 50 41Z"/></svg>
          <div class="pt-[9px]"><h2 class="text-[33px] leading-[38px] font-bold">Prins Bertils stig</h2><p class="text-[31px] leading-[42px]">1945 meters - (no tips)</p></div>
        </div>
        <hr class="mr-[10px] ml-10 border-[#c6c6c9]">
      </li>
      <li>
        <div class="flex h-[95px] gap-[30px] pt-0.5 pl-[10px]">
          <svg class="size-[88px] shrink-0 bg-[#808080]" viewBox="0 0 88 88" fill="#fff"><path d="M18.500 69.500C16 50 27 33 48 32Q53 32 54 28L56 18 59 29 70 32 58 36Q56 38 56 42C53 61 40 71 18.500 69.500Z"/><circle cx="24.500" cy="61" r="4" fill="#808080"/><path fill="none" stroke="#808080" stroke-width="2" d="M38 41Q46 44 47 53M33 43.500Q42 47 43 57M29.500 46.500Q38 50 39.500 60M26.500 50Q34 53 36 62"/></svg>
          <div class="pt-[9px]"><h2 class="text-[33px] leading-[38px] font-bold">Görviksfiskarn</h2><p class="text-[31px] leading-[42px]">1985 meters - Görvik - (no tips)</p></div>
        </div>
        <hr class="mr-[10px] ml-10 border-[#c6c6c9]">
      </li>
      <li>
        <div class="flex h-[95px] gap-[30px] pt-0.5 pl-[10px]">
          <svg class="size-[88px] shrink-0 bg-[#808080]" viewBox="0 0 88 88" fill="#fff"><defs><clipPath id="slice"><path d="M24.500 34Q44 26 63.500 34L44 66Z"/></clipPath></defs><path fill="none" stroke="#fff" stroke-width="5" stroke-linecap="round" d="M21.500 27.500Q44 17.500 66.500 27.500"/><path stroke="#fff" stroke-width="1.500" stroke-linejoin="round" d="M23 33.500Q44 26 65 33.500L45.500 66.500Q44 68 42.500 66.500Z"/><g fill="#808080" clip-path="url(#slice)"><circle cx="33" cy="43" r="8"/><circle cx="54" cy="42" r="8.500"/><circle cx="44" cy="61" r="5.500"/></g></svg>
          <div class="pt-[9px]"><h2 class="text-[33px] leading-[38px] font-bold">Cavalini</h2><p class="text-[31px] leading-[42px]">2040 meters - (3 tips)</p></div>
        </div>
        <hr class="mr-[10px] ml-10 border-[#c6c6c9]">
      </li>
      <li>
        <div class="flex h-[95px] gap-[30px] pt-0.5 pl-[10px]">
          <svg class="size-[88px] shrink-0 bg-[#808080]" viewBox="0 0 88 88" fill="#fff"><path d="M40 18H50.500L52 29H38Z"/><circle cx="45" cy="49" r="18.500"/><ellipse cx="53.500" cy="42" rx="4.500" ry="7.500" fill="#808080" transform="rotate(-28 53.500 42)"/></svg>
          <div class="pt-[9px]"><h2 class="text-[33px] leading-[38px] font-bold">Mosaikplatsen Tvättstugan</h2></div>
        </div>
      </li>
    </ul>

    <div class="shrink-0 border-t border-[#b2b2b2] px-9 py-[15px]">
      <div role="group" aria-label="Sections" class="grid h-[58px] grid-cols-5">
        <button type="button" aria-label="Pin" class="flex items-center justify-center rounded-l-lg border-2 border-r-0 border-[#1877e0]">
          <svg class="h-11 w-5" viewBox="0 0 20 44"><path d="M10 10V42" stroke="#007aff" stroke-width="4" stroke-linecap="round"/><circle cx="10" cy="9" r="8.300" fill="#007aff"/><circle cx="7" cy="6.500" r="2" fill="#fff"/></svg>
        </button>
        <button type="button" aria-label="Area" class="flex items-center justify-center border-2 border-r-0 border-[#1877e0]">
          <svg class="size-[50px]" viewBox="0 0 50 50" fill="none" stroke="#1877e0"><circle cx="25" cy="25" r="23.500" stroke-width="1.800" stroke-dasharray="5 3"/><path stroke-width="2.400" d="M20.500 21L29.500 29.500M29.500 21L20.500 29.500"/><path stroke-width="1.500" d="M12 11L18 17M18 11L12 17M7 27L13 33M13 27L7 33M38.500 15L44 21M44 15L38.500 21"/></svg>
        </button>
        <button type="button" aria-label="Street view" class="flex items-center justify-center border-2 border-r-0 border-[#1877e0]">
          <svg class="h-[52px] w-6" viewBox="0 0 24 52" fill="#007aff"><circle cx="12" cy="5.500" r="5.300"/><path d="M3 12.500H21Q23.500 12.500 23.500 15V32.500H20V18H18.500V50Q18.500 51.500 17 51.500H13V34H11V51.500H7Q5.500 51.500 5.500 50V18H4V32.500H.5V15Q.5 12.500 3 12.500Z"/></svg>
        </button>
        <button type="button" aria-label="Photos" class="flex items-center justify-center border-2 border-r-0 border-[#1877e0]">
          <svg class="h-11 w-14" viewBox="0 0 56 44" fill="none" stroke="#1877e0" stroke-width="2" stroke-linejoin="round"><rect x="1" y="1" width="54" height="42" rx="1"/><circle cx="46" cy="10.500" r="3.300"/><path d="M7 37L21.500 19 31 30 37 23 49 37Z"/></svg>
        </button>
        <button type="button" aria-label="Information" aria-pressed="true" class="flex items-center justify-center rounded-r-lg bg-[#007aff]">
          <svg class="size-11" viewBox="0 0 44 44"><circle cx="22" cy="22" r="21" fill="none" stroke="#fff" stroke-width="1.800"/><circle cx="22" cy="12" r="3" fill="#fff"/><path fill="#fff" d="M18.500 17.500H24V32H26.500V34H18V32H20.500V19.500H18.500Z"/></svg>
        </button>
      </div>
    </div>
  </div>
</div>
</body>
</html>
